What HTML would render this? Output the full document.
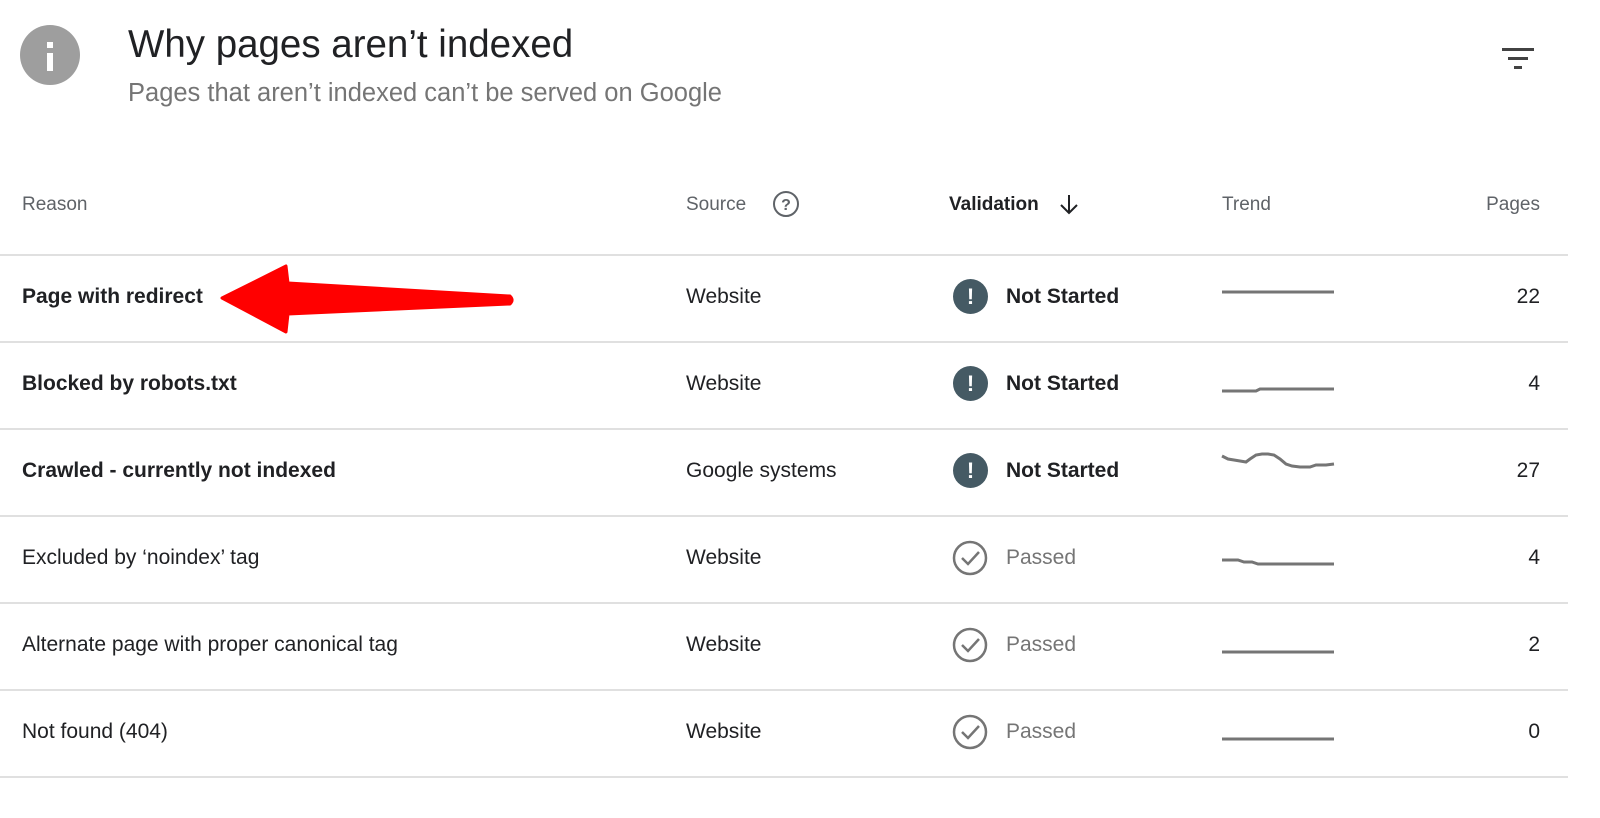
<!DOCTYPE html>
<html><head><style>
body{margin:0;width:1600px;height:818px;background:#fff;font-family:"Liberation Sans",sans-serif;position:relative;overflow:hidden;color:#202124}
.a{position:absolute;white-space:nowrap}
.hd{font-size:19px;color:#5f6368;top:194px}
.line{position:absolute;left:0;width:1568px;height:2px;background:#e0e0e0}
.r{font-size:21px}
.b{font-weight:bold}
.ex{position:absolute;left:953px;width:35px;height:35px;border-radius:50%;background:#455a64;color:#fff;font-weight:bold;font-size:22px;text-align:center;line-height:35px}
.chk{position:absolute;left:952px}
.ps{color:#757575}
</style></head><body>
<div class="a" style="left:20px;top:25px;width:60px;height:60px;border-radius:50%;background:#9e9e9e"></div>
<div class="a" style="left:47px;top:42px;width:6px;height:6px;background:#fff"></div>
<div class="a" style="left:47px;top:53px;width:6px;height:18px;background:#fff"></div>
<div class="a" style="left:128px;top:23px;font-size:38.5px;color:#202124">Why pages aren’t indexed</div>
<div class="a" style="left:128px;top:79px;font-size:25.5px;color:#757575">Pages that aren’t indexed can’t be served on Google</div>
<svg class="a" style="left:1502px;top:46px" width="36" height="28"><rect x="0" y="2" width="32" height="3" fill="#424242"/><rect x="6" y="11" width="20" height="3" fill="#424242"/><rect x="12" y="20" width="8" height="3" fill="#424242"/></svg>
<div class="a hd" style="left:22px">Reason</div>
<div class="a hd" style="left:686px">Source</div>
<svg class="a" style="left:772px;top:190px" width="28" height="28"><circle cx="14" cy="14" r="12" fill="none" stroke="#5f6368" stroke-width="2"/><text x="14" y="20" text-anchor="middle" font-size="16" font-family="Liberation Sans" fill="#5f6368" font-weight="bold">?</text></svg>
<div class="a hd b" style="left:949px;color:#202124">Validation</div>
<svg class="a" style="left:1058px;top:193px" width="22" height="24"><path d="M11 2V20M3 12L11 20L19 12" fill="none" stroke="#202124" stroke-width="2"/></svg>
<div class="a hd" style="left:1222px">Trend</div>
<div class="a hd" style="right:60px">Pages</div>
<div class="line" style="top:254px"></div>
<div class="line" style="top:341px"></div>
<div class="line" style="top:428px"></div>
<div class="line" style="top:515px"></div>
<div class="line" style="top:602px"></div>
<div class="line" style="top:689px"></div>
<div class="line" style="top:776px"></div>

<div class="a r b" style="left:22px;top:285px">Page with redirect</div>
<div class="a r b" style="left:22px;top:372px">Blocked by robots.txt</div>
<div class="a r b" style="left:22px;top:459px">Crawled - currently not indexed</div>
<div class="a r" style="left:22px;top:546px">Excluded by ‘noindex’ tag</div>
<div class="a r" style="left:22px;top:633px">Alternate page with proper canonical tag</div>
<div class="a r" style="left:22px;top:720px">Not found (404)</div>

<div class="a r" style="left:686px;top:285px">Website</div>
<div class="a r" style="left:686px;top:372px">Website</div>
<div class="a r" style="left:686px;top:459px">Google systems</div>
<div class="a r" style="left:686px;top:546px">Website</div>
<div class="a r" style="left:686px;top:633px">Website</div>
<div class="a r" style="left:686px;top:720px">Website</div>

<div class="ex" style="top:279px">!</div><div class="a r b" style="left:1006px;top:285px">Not Started</div>
<div class="ex" style="top:366px">!</div><div class="a r b" style="left:1006px;top:372px">Not Started</div>
<div class="ex" style="top:453px">!</div><div class="a r b" style="left:1006px;top:459px">Not Started</div>
<svg class="chk" style="top:540px" width="36" height="36"><circle cx="18" cy="18" r="16" fill="none" stroke="#757575" stroke-width="2.5"/><path d="M10 18L16 24L27 12" fill="none" stroke="#757575" stroke-width="2.5"/></svg><div class="a r ps" style="left:1006px;top:546px">Passed</div>
<svg class="chk" style="top:627px" width="36" height="36"><circle cx="18" cy="18" r="16" fill="none" stroke="#757575" stroke-width="2.5"/><path d="M10 18L16 24L27 12" fill="none" stroke="#757575" stroke-width="2.5"/></svg><div class="a r ps" style="left:1006px;top:633px">Passed</div>
<svg class="chk" style="top:714px" width="36" height="36"><circle cx="18" cy="18" r="16" fill="none" stroke="#757575" stroke-width="2.5"/><path d="M10 18L16 24L27 12" fill="none" stroke="#757575" stroke-width="2.5"/></svg><div class="a r ps" style="left:1006px;top:720px">Passed</div>

<svg class="a" style="left:1220px;top:250px" width="120" height="530" fill="none" stroke="#757575" stroke-width="3">
<path d="M2 42H114"/>
<path d="M2 141H36L40 139H114"/>
<path d="M2 206L8 209L14 210L20 211L26 212L30 209L36 205L42 204L48 204L54 205L60 209L66 214L72 216L80 217L90 217L96 215L106 215L114 214"/>
<path d="M2 310H18L24 312H32L38 314H114"/>
<path d="M2 402H114"/>
<path d="M2 489H114"/>
</svg>

<div class="a r" style="right:60px;top:285px">22</div>
<div class="a r" style="right:60px;top:372px">4</div>
<div class="a r" style="right:60px;top:459px">27</div>
<div class="a r" style="right:60px;top:546px">4</div>
<div class="a r" style="right:60px;top:633px">2</div>
<div class="a r" style="right:60px;top:720px">0</div>

<svg class="a" style="left:0;top:0" width="600" height="400"><path d="M222 298L286 266L288 283L510 296Q514 300 510 304L288 314L286 332Z" fill="#ff0000" stroke="#ff0000" stroke-width="3" stroke-linejoin="round"/></svg>
</body></html>
